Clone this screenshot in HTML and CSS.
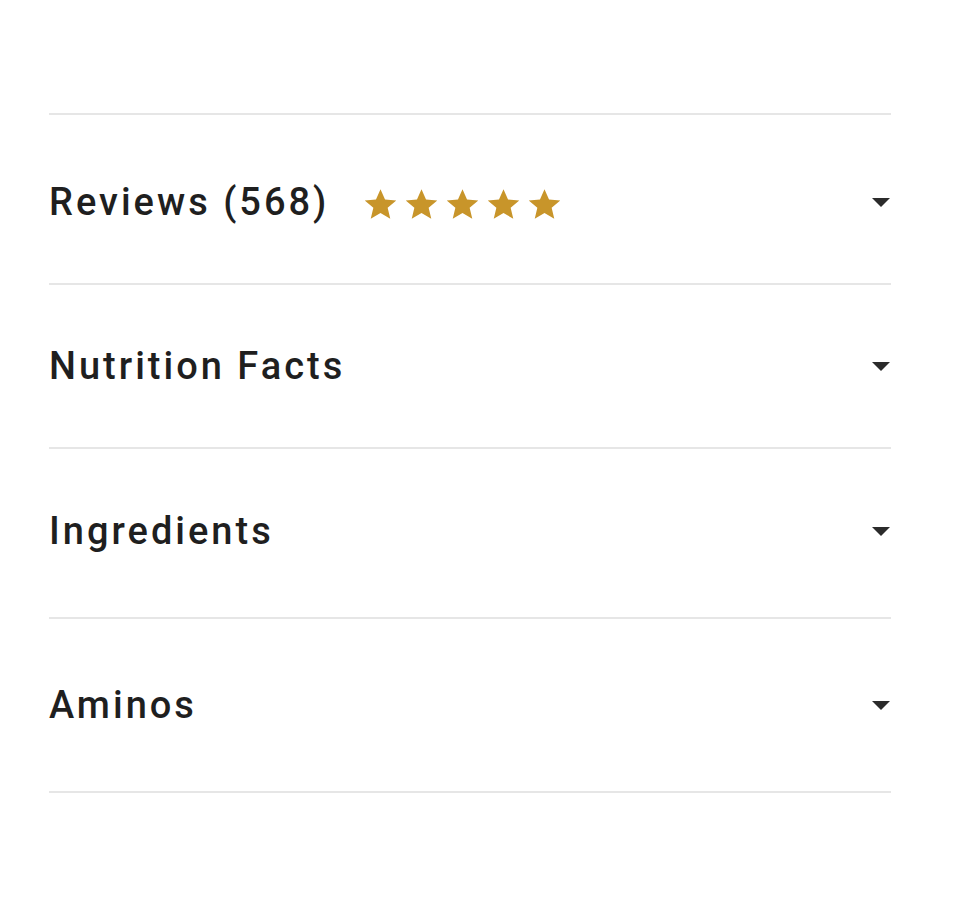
FILE: index.html
```html
<!DOCTYPE html>
<html lang="en">
<head>
    <meta charset="UTF-8">
    <meta name="viewport" content="width=device-width, initial-scale=1.0">
    <title>Product details</title>
    <link rel="stylesheet" href="styles.css">
</head>
<body>

    <div class="accordion">
        <!-- Reviews -->
        <div class="item item-reviews">
            <div class="item-title">
                <span>Reviews (568)</span>
                <span class="stars">
                    <svg viewBox="0 0 24 24"><path d="M12 1.5l3.1 7.1 7.7.6-5.9 5 1.8 7.6L12 17.8l-6.7 4 1.8-7.6-5.9-5 7.7-.6z"/></svg>
                    <svg viewBox="0 0 24 24"><path d="M12 1.5l3.1 7.1 7.7.6-5.9 5 1.8 7.6L12 17.8l-6.7 4 1.8-7.6-5.9-5 7.7-.6z"/></svg>
                    <svg viewBox="0 0 24 24"><path d="M12 1.5l3.1 7.1 7.7.6-5.9 5 1.8 7.6L12 17.8l-6.7 4 1.8-7.6-5.9-5 7.7-.6z"/></svg>
                    <svg viewBox="0 0 24 24"><path d="M12 1.5l3.1 7.1 7.7.6-5.9 5 1.8 7.6L12 17.8l-6.7 4 1.8-7.6-5.9-5 7.7-.6z"/></svg>
                    <svg viewBox="0 0 24 24"><path d="M12 1.5l3.1 7.1 7.7.6-5.9 5 1.8 7.6L12 17.8l-6.7 4 1.8-7.6-5.9-5 7.7-.6z"/></svg>
                </span>
            </div>
            <span class="caret"></span>
        </div>

        <!-- Nutrition -->
        <div class="item item-nutrition">
            <div class="item-title">Nutrition Facts</div>
            <span class="caret"></span>
        </div>

        <!-- Ingredients -->
        <div class="item item-ingredients">
            <div class="item-title">Ingredients</div>
            <span class="caret"></span>
        </div>

        <!-- Aminos -->
        <div class="item item-aminos">
            <div class="item-title">Aminos</div>
            <span class="caret"></span>
        </div>
    </div>

</body>
</html>
```

FILE: styles.css
```css
body {
    margin: 0;
    background-color: #fff;
    font-family: Roboto, "Liberation Sans", sans-serif;
    color: #1f1f1f;
}

.accordion {
    margin: 113px 63px 0 49px;
    border-top: 2px solid #e6e6e6;
}

.item {
    display: flex;
    align-items: center;
    justify-content: space-between;
    box-sizing: border-box;
    height: 170px;
    border-bottom: 2px solid #e6e6e6;
}
.item-reviews {
    padding-top: 6px;
}
.item-nutrition {
    height: 164px;
}
.item-ingredients {
    padding-bottom: 4px;
}
.item-aminos {
    height: 174px;
}

.item-title {
    display: flex;
    align-items: center;
    font-size: 38px;
    font-weight: 500;
    letter-spacing: 3px;
}

.stars {
    display: flex;
    gap: 6px;
    margin-left: 34px;
    margin-top: 4px;
}
.stars svg {
    width: 35px;
    height: 35px;
    fill: #c8952a;
}

.caret {
    width: 0;
    height: 0;
    margin-right: 1px;
    border-left: 9px solid transparent;
    border-right: 9px solid transparent;
    border-top: 9px solid #2b2b2b;
}
```
